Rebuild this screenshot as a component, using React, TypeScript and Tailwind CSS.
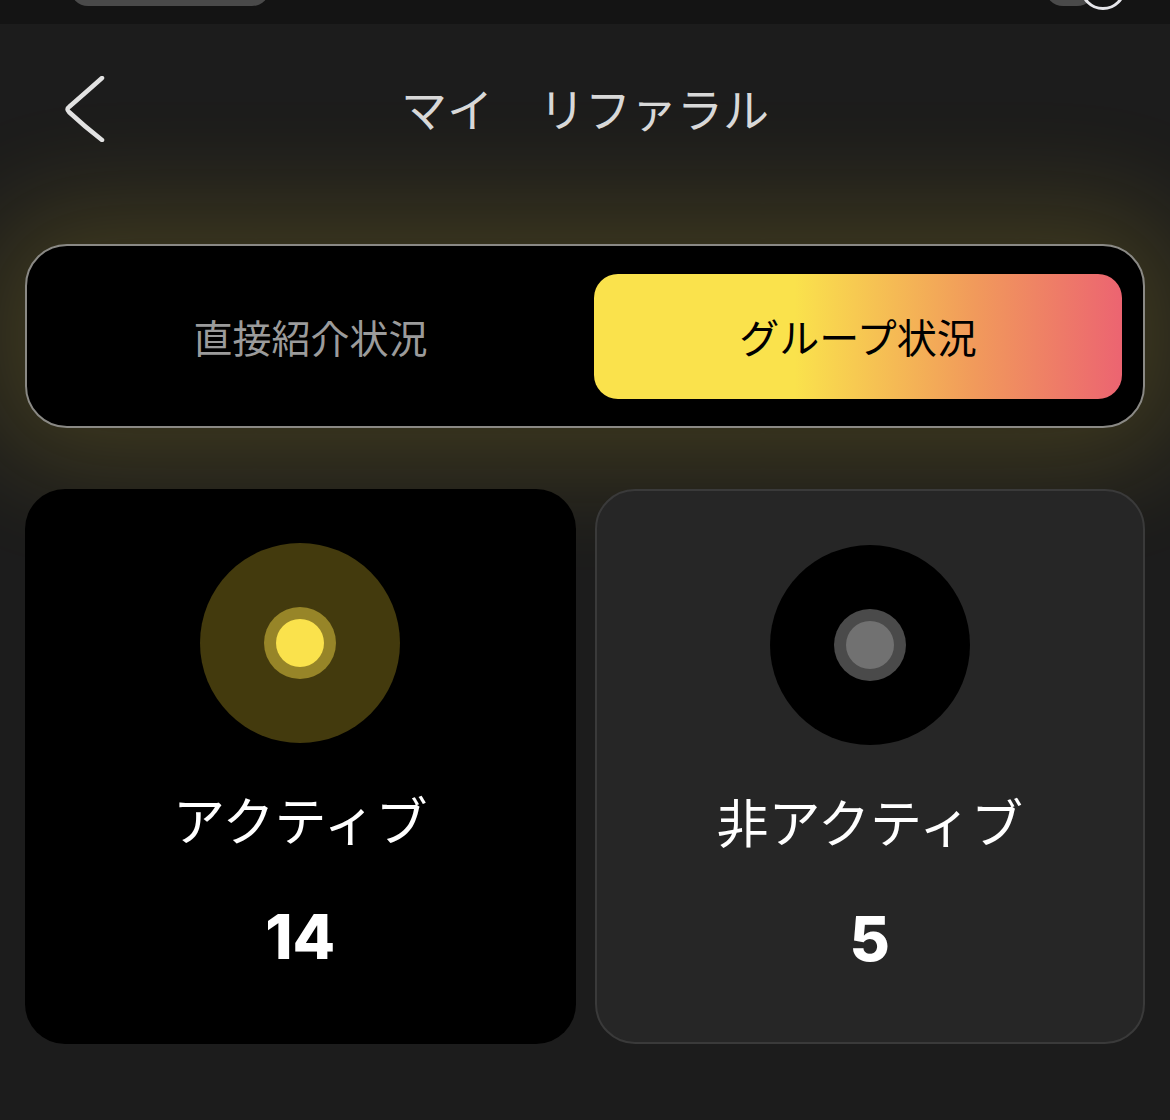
import React from 'react'

const jp = "font-['Noto_Sans_CJK_JP','Noto_Sans',sans-serif]"

function StatusCard({
  label,
  count,
  active,
}: {
  label: string
  count: number
  active: boolean
}) {
  return (
    <div
      className={`flex h-[555px] flex-col items-center rounded-[40px] pt-[54px] ${
        active ? 'bg-black' : 'border-2 border-[#3a3a3a] bg-[#262626]'
      }`}
    >
      <div
        className={`flex h-[200px] w-[200px] items-center justify-center rounded-full ${
          active ? 'bg-[#433a0d]' : 'bg-black'
        }`}
      >
        <div
          className={`flex h-[72px] w-[72px] items-center justify-center rounded-full ${
            active ? 'bg-[#978528]' : 'bg-[#4a4a4a]'
          }`}
        >
          <div className={`h-[48px] w-[48px] rounded-full ${active ? 'bg-[#fae24c]' : 'bg-[#717171]'}`} />
        </div>
      </div>
      <p className={`${jp} mt-[46px] text-[52px] leading-[60px] text-white`}>{label}</p>
      <p className="mt-[53px] font-['Inter',sans-serif] text-[62px] font-extrabold leading-[70px] text-white">{count}</p>
    </div>
  )
}

export default function App() {
  return (
    <div className="h-[1120px] w-full overflow-hidden bg-[#1c1c1c]">
      {/* cropped status strip */}
      <div className="relative h-[24px] overflow-hidden bg-[#141414]">
        <div className="absolute left-[70px] top-[-30px] h-[36px] w-[200px] rounded-full bg-[#4a4a4a]" />
        <div className="absolute left-[1045px] top-[-30px] h-[36px] w-[50px] rounded-full bg-[#4a4a4a]" />
        <div className="absolute left-[1080px] top-[-36px] h-[46px] w-[46px] rounded-full border-[3px] border-[#e6e6ea] bg-[#141414]" />
      </div>

      {/* header */}
      <header className="relative flex h-[172px] items-center justify-center">
        <button className="absolute left-[62px] top-[52px]" aria-label="Back">
          <svg width="44" height="66" viewBox="0 0 44 66" fill="none">
            <path
              d="M40 2 Q22 18 7 31 Q4 33 7 36 Q22 50 40 64"
              stroke="#e2e2e2"
              strokeWidth="4.5"
              strokeLinecap="round"
              strokeLinejoin="round"
            />
          </svg>
        </button>
        <h1 className={`${jp} -mt-[6px] text-[46px] leading-none text-[#d8d8d8]`}>マイ　リファラル</h1>
      </header>

      <main className="px-[25px] pt-[48px]">
        {/* segmented tabs */}
        <div className="flex h-[184px] items-center rounded-[42px] border-2 border-[#8a8985] bg-black pr-[21px] shadow-[0_0_110px_40px_rgba(255,220,50,0.15)]">
          <button className={`${jp} flex-1 text-[39px] text-[#9b9b9b]`}>直接紹介状況</button>
          <button
            className={`${jp} h-[125px] w-[528px] rounded-[24px] bg-[linear-gradient(90deg,#fae24c_0%,#fae24c_38%,#f19a5b_72%,#ec6471_100%)] text-[40px] text-black`}
          >
            グループ状況
          </button>
        </div>

        {/* status cards */}
        <div className="mt-[61px] grid grid-cols-2 gap-[19px]">
          <StatusCard label="アクティブ" count={14} active />
          <StatusCard label="非アクティブ" count={5} active={false} />
        </div>
      </main>
    </div>
  )
}
